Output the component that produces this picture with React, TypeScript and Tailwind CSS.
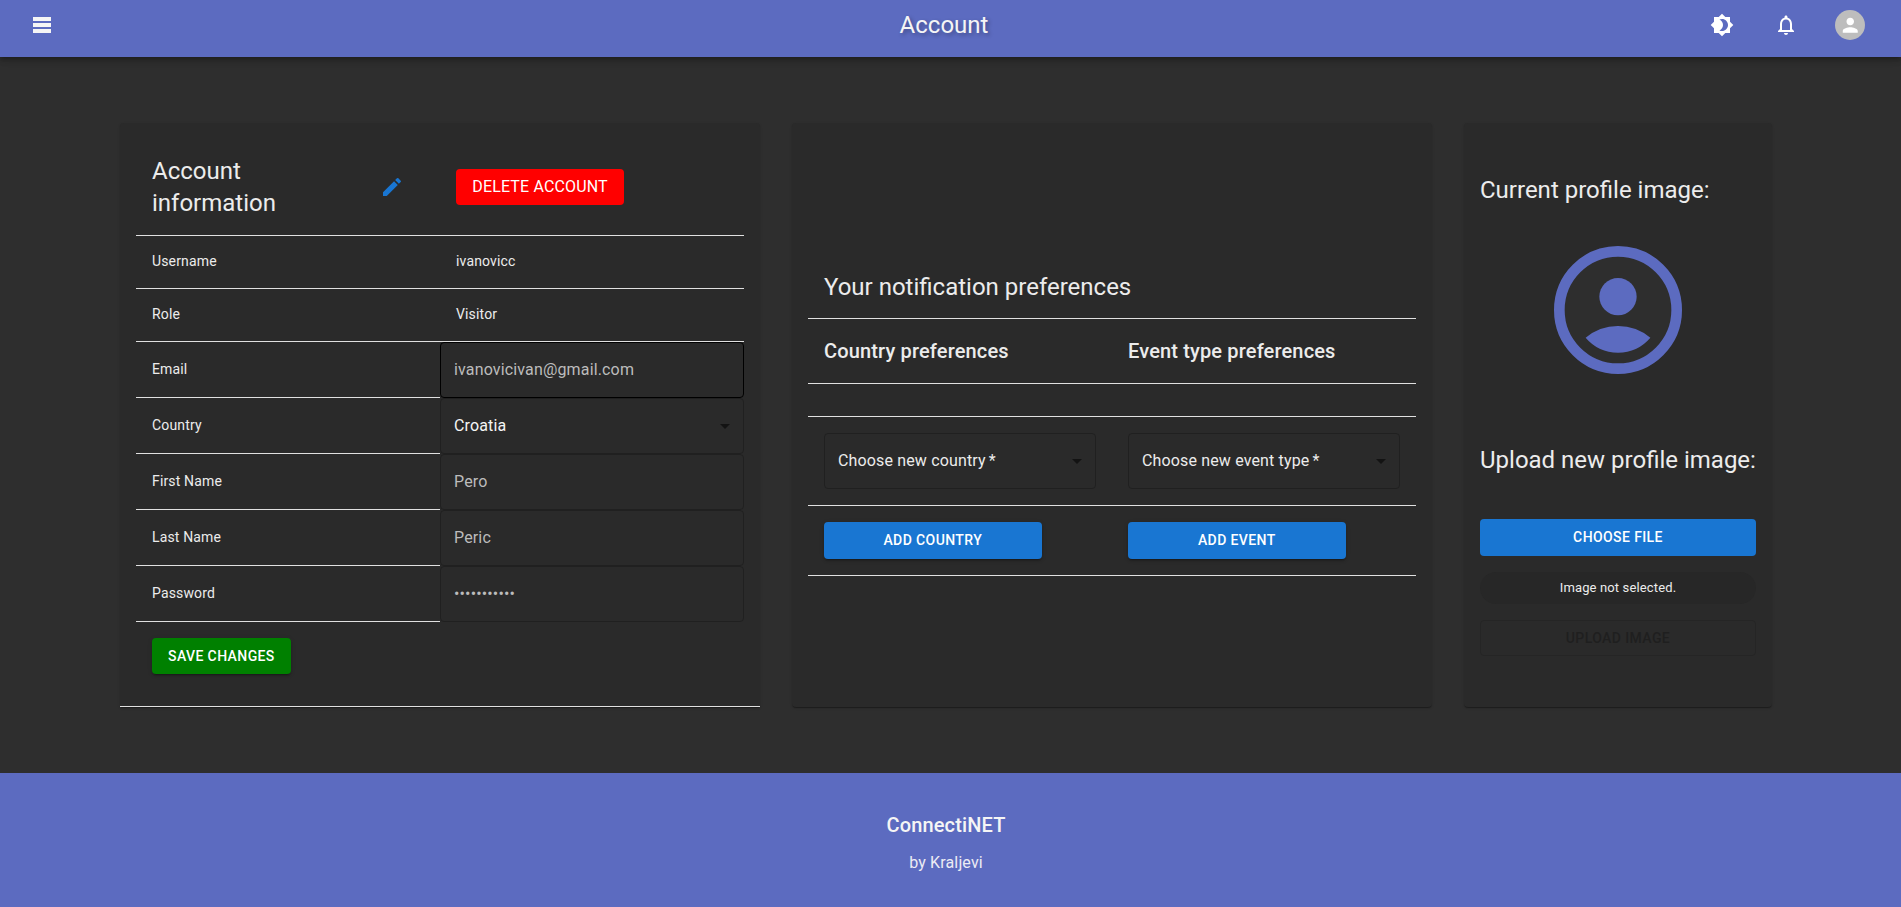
import type { ReactNode } from "react";
import {
  MdArrowDropDown,
  MdBrightness4,
  MdEdit,
  MdNotificationsNone,
  MdPerson,
} from "react-icons/md";

const paperShadow =
  "shadow-[0px_2px_1px_-1px_rgba(0,0,0,0.2),0px_1px_1px_0px_rgba(0,0,0,0.14),0px_1px_3px_0px_rgba(0,0,0,0.12)]";
const buttonShadow =
  "shadow-[0px_3px_1px_-2px_rgba(0,0,0,0.2),0px_2px_2px_0px_rgba(0,0,0,0.14),0px_1px_5px_0px_rgba(0,0,0,0.12)]";
const buttonText =
  "flex items-center justify-center rounded-sm text-sm font-medium leading-[24.5px] tracking-[0.02857em] text-white";

function MenuIcon() {
  return (
    <svg width="18" height="16" viewBox="0 0 18 16" fill="#f5f5f5">
      <path d="M0 0h18v4H0zM0 6h18v4H0zM0 12h18v4H0z" />
    </svg>
  );
}

function ProfilePicture() {
  return (
    <div className="size-32 rounded-full bg-[#2e2e2e]">
      <svg width="128" height="128" viewBox="0 0 24 24" fill="#5c6bc0">
        <circle cx="12" cy="12" r="11" fill="none" stroke="#5c6bc0" strokeWidth="2" />
        <circle cx="12" cy="9.5" r="3.5" />
        <path d="M5.93 17.2A9.42 9.42 0 0 1 12 15a9.42 9.42 0 0 1 6.07 2.2A8 8 0 0 1 12 20a8 8 0 0 1-6.07-2.8Z" />
      </svg>
    </div>
  );
}

function Header() {
  return (
    <header className="z-10 flex h-[57px] shrink-0 items-start bg-[#5c6bc0] shadow-[0px_2px_4px_-1px_rgba(0,0,0,0.2),0px_4px_5px_0px_rgba(0,0,0,0.14),0px_1px_10px_0px_rgba(0,0,0,0.12)]">
      <div className="flex h-[50px] flex-1 items-center pl-[33px]">
        <button aria-label="Menu">
          <MenuIcon />
        </button>
      </div>
      <h1 className="mr-[10px] flex h-[50px] items-center text-2xl text-[#f5f5f5] [text-shadow:2px_2px_4px_rgba(0,0,0,0.3)]">
        Account
      </h1>
      <div className="flex h-[50px] flex-1 items-center justify-end gap-10 pr-9 text-white">
        <MdBrightness4 size={24} />
        <MdNotificationsNone size={24} />
        <span className="-ml-[3px] flex size-[30px] items-center justify-center rounded-full bg-[#bdbdbd]">
          <MdPerson size={22.5} />
        </span>
      </div>
    </header>
  );
}

function Row({ label, children }: { label: string; children: ReactNode }) {
  return (
    <div className="flex h-[53px] items-center border-b border-[#e0e0e0] pb-0.5 text-sm leading-5 tracking-[0.01071em]">
      <div className="w-1/2 px-4">{label}</div>
      <div className="w-1/2 px-4">{children}</div>
    </div>
  );
}

function Field({
  label,
  value,
  hovered,
  select,
}: {
  label: string;
  value: string;
  hovered?: boolean;
  select?: boolean;
}) {
  return (
    <div className="flex h-14">
      <div className="flex w-1/2 items-center border-b border-[#e0e0e0] px-4 pb-px text-sm leading-5 tracking-[0.01071em]">
        {label}
      </div>
      <div
        className={`flex w-1/2 items-center justify-between rounded-sm border pl-[13px] pr-1.5 text-base tracking-[0.00938em] ${
          hovered ? "border-black" : "border-[#202020]"
        } ${select ? "text-[#f5f5f5]" : "text-[#bcbcbc]"}`}
      >
        <span>{value}</span>
        {select && <MdArrowDropDown size={24} color="#131313" />}
      </div>
    </div>
  );
}

function AccountCard() {
  return (
    <section className={`flex w-[640px] flex-col justify-between rounded-t-sm bg-[#2a2a2a] ${paperShadow}`}>
      <div className="px-4 pt-4">
        <div className="flex h-[97px] items-center border-b border-[#e0e0e0]">
          <div className="flex w-1/2 items-center justify-between pl-4 pr-9">
            <h2 className="w-40 text-2xl leading-8">Account information</h2>
            <MdEdit size={24} color="#1976d2" />
          </div>
          <div className="w-1/2 px-4">
            <button className="flex h-9 w-[168px] items-center justify-center rounded-sm bg-[#ff0000] text-base tracking-[0.00938em] text-white">
              DELETE ACCOUNT
            </button>
          </div>
        </div>
        <Row label="Username">ivanovicc</Row>
        <Row label="Role">Visitor</Row>
        <Field label="Email" value="ivanovicivan@gmail.com" hovered />
        <Field label="Country" value="Croatia" select />
        <Field label="First Name" value="Pero" />
        <Field label="Last Name" value="Peric" />
        <Field label="Password" value="•••••••••••" />
        <div className="p-4">
          <button className={`${buttonText} ${buttonShadow} h-9 bg-[#008000] px-4`}>SAVE CHANGES</button>
        </div>
      </div>
      <div className="h-px bg-[#e0e0e0]" />
    </section>
  );
}

function Picker({ label }: { label: string }) {
  return (
    <div className="w-1/2 p-4">
      <div className="flex h-14 items-center justify-between rounded-sm border border-[#202020] pl-[13px] pr-1.5 text-base tracking-[0.00938em]">
        <span>
          {label}
          <span className="-ml-px"> *</span>
        </span>
        <MdArrowDropDown size={24} color="#131313" />
      </div>
    </div>
  );
}

function PreferencesCard() {
  return (
    <section className={`flex w-[640px] flex-col justify-center rounded-sm bg-[#2a2a2a] px-4 ${paperShadow}`}>
      <h2 className="border-b border-[#e0e0e0] px-4 pb-[15px] pt-[17px] text-2xl leading-8">
        Your notification preferences
      </h2>
      <div className="flex border-b border-[#e0e0e0] text-xl font-medium leading-8 tracking-[0.0075em]">
        <h3 className="w-1/2 p-4">Country preferences</h3>
        <h3 className="w-1/2 p-4">Event type preferences</h3>
      </div>
      <div className="h-[33px] border-b border-[#e0e0e0]" />
      <div className="flex border-b border-[#e0e0e0]">
        <Picker label="Choose new country" />
        <Picker label="Choose new event type" />
      </div>
      <div className="flex border-b border-[#e0e0e0]">
        <div className="w-1/2 p-4">
          <button className={`${buttonText} ${buttonShadow} h-[36.5px] w-4/5 bg-[#1976d2]`}>ADD COUNTRY</button>
        </div>
        <div className="w-1/2 p-4">
          <button className={`${buttonText} ${buttonShadow} h-[36.5px] w-4/5 bg-[#1976d2]`}>ADD EVENT</button>
        </div>
      </div>
    </section>
  );
}

function ImageCard() {
  return (
    <section className={`flex w-[308px] flex-col rounded-sm bg-[#2a2a2a] px-4 pt-[51px] ${paperShadow}`}>
      <h2 className="text-2xl leading-8">Current profile image:</h2>
      <div className="mt-10 flex justify-center">
        <ProfilePicture />
      </div>
      <h2 className="mt-[70px] whitespace-nowrap text-2xl leading-8">Upload new profile image:</h2>
      <button className={`${buttonText} mt-[43px] h-[36.5px] bg-[#1976d2]`}>CHOOSE FILE</button>
      <div className="mt-4 flex h-8 items-center justify-center rounded-2xl bg-[#272727] text-[13px] tracking-[0.01071em]">
        Image not selected.
      </div>
      <button
        disabled
        className="mt-4 flex h-9 items-center justify-center rounded-sm border border-[#252525] text-sm font-medium tracking-[0.02857em] text-[#1f1f1f]"
      >
        UPLOAD IMAGE
      </button>
    </section>
  );
}

export default function App() {
  return (
    <div className="flex h-[907px] w-full flex-col overflow-hidden bg-[#2e2e2e] font-[Roboto,sans-serif] text-[#ececec]">
      <Header />
      <main className="flex flex-1 justify-center pr-[9px] pt-[66px]">
        <div className="flex h-[584px] gap-8">
          <AccountCard />
          <PreferencesCard />
          <ImageCard />
        </div>
      </main>
      <footer className="flex h-[134px] shrink-0 flex-col items-center bg-[#5c6bc0] pr-[9px] pt-9">
        <p className="text-xl font-medium leading-8 tracking-[0.0075em] text-[#f5f5f5]">ConnectiNET</p>
        <p className="mt-2.5 text-base leading-6 tracking-[0.00938em] text-[#ececf4]">by Kraljevi</p>
      </footer>
    </div>
  );
}
